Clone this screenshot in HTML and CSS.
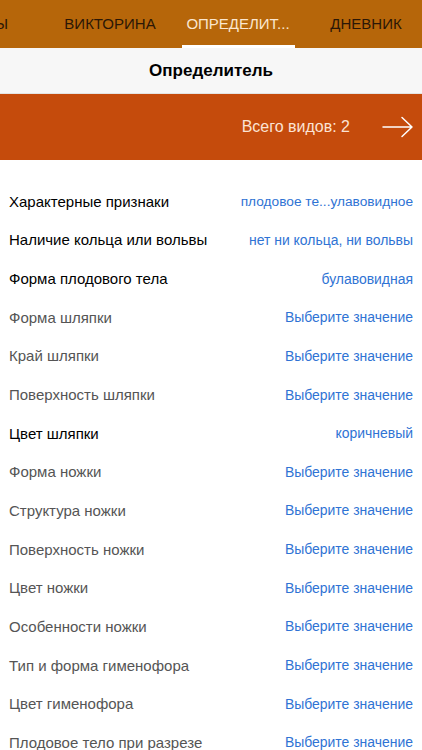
FILE: index.html
```
<!DOCTYPE html>
<html lang="ru">
<head>
<meta charset="utf-8">
<link rel="stylesheet" href="styles.css">
</head>
<body>
<div class="tabs">
  <div class="tabrow">
    <div class="tab">ГРИБЫ</div>
    <div class="tab">ВИКТОРИНА</div>
    <div class="tab active">ОПРЕДЕЛИТ...</div>
    <div class="tab">ДНЕВНИК</div>
  </div>
</div>
<div class="navbar">Определитель</div>
<div class="banner">
  <span class="count">Всего видов: 2</span>
  <svg class="arrow" width="32" height="22" viewBox="0 0 32 22"><path d="M1 11 H30 M20 1.5 L30 11 L20 20.5" fill="none" stroke="#fff" stroke-width="1.5" stroke-linecap="round" stroke-linejoin="round"/></svg>
</div>
<div class="list">
  <div class="row"><span class="label set">Характерные признаки</span><span class="value long">плодовое те...улавовидное</span></div>
  <div class="row"><span class="label set">Наличие кольца или вольвы</span><span class="value">нет ни кольца, ни вольвы</span></div>
  <div class="row"><span class="label set">Форма плодового тела</span><span class="value">булавовидная</span></div>
  <div class="row"><span class="label">Форма шляпки</span><span class="value">Выберите значение</span></div>
  <div class="row"><span class="label">Край шляпки</span><span class="value">Выберите значение</span></div>
  <div class="row"><span class="label">Поверхность шляпки</span><span class="value">Выберите значение</span></div>
  <div class="row"><span class="label set">Цвет шляпки</span><span class="value">коричневый</span></div>
  <div class="row"><span class="label">Форма ножки</span><span class="value">Выберите значение</span></div>
  <div class="row"><span class="label">Структура ножки</span><span class="value">Выберите значение</span></div>
  <div class="row"><span class="label">Поверхность ножки</span><span class="value">Выберите значение</span></div>
  <div class="row"><span class="label">Цвет ножки</span><span class="value">Выберите значение</span></div>
  <div class="row"><span class="label">Особенности ножки</span><span class="value">Выберите значение</span></div>
  <div class="row"><span class="label">Тип и форма гименофора</span><span class="value">Выберите значение</span></div>
  <div class="row"><span class="label">Цвет гименофора</span><span class="value">Выберите значение</span></div>
  <div class="row"><span class="label">Плодовое тело при разрезе</span><span class="value">Выберите значение</span></div>
</div>
</body>
</html>
```
FILE: styles.css
```
html, body {
  margin: 0;
  padding: 0;
  background: #fff;
  font-family: "Liberation Sans", Arial, sans-serif;
  overflow: hidden;
}
.tabs {
  height: 48px;
  background: #b6660a;
  overflow: hidden;
}
.tabrow {
  display: flex;
  margin-left: -82px;
  height: 48px;
}
.tab {
  flex: 0 0 128px;
  display: flex;
  align-items: center;
  justify-content: center;
  font-size: 15px;
  color: #2b1706;
  position: relative;
  padding-bottom: 2px;
  box-sizing: border-box;
}
.tab.active {
  color: #fbe6cf;
}
.tab.active::after {
  content: "";
  position: absolute;
  left: 8px;
  right: 7px;
  bottom: 0;
  height: 3px;
  background: #fff;
}
.navbar {
  height: 45px;
  background: #f7f7f7;
  border-bottom: 1px solid #e4e4e4;
  display: flex;
  align-items: center;
  justify-content: center;
  font-size: 17px;
  font-weight: bold;
  color: #000;
}
.banner {
  height: 66px;
  background: #c54b0c;
  display: flex;
  align-items: center;
  justify-content: flex-end;
  padding-right: 8px;
  gap: 32px;
}
.count {
  color: #fbe3d4;
  font-size: 16px;
}
.arrow {
  display: block;
}
.list {
  padding-top: 22px;
}
.row {
  height: 38.65px;
  display: flex;
  align-items: center;
  justify-content: space-between;
  padding: 0 9px;
}
.label {
  color: #555;
  font-size: 15px;
}
.label.set {
  color: #000;
}
.value {
  color: #2f73d4;
  font-size: 13.95px;
}
.value.long {
  font-size: 13.7px;
}
```
